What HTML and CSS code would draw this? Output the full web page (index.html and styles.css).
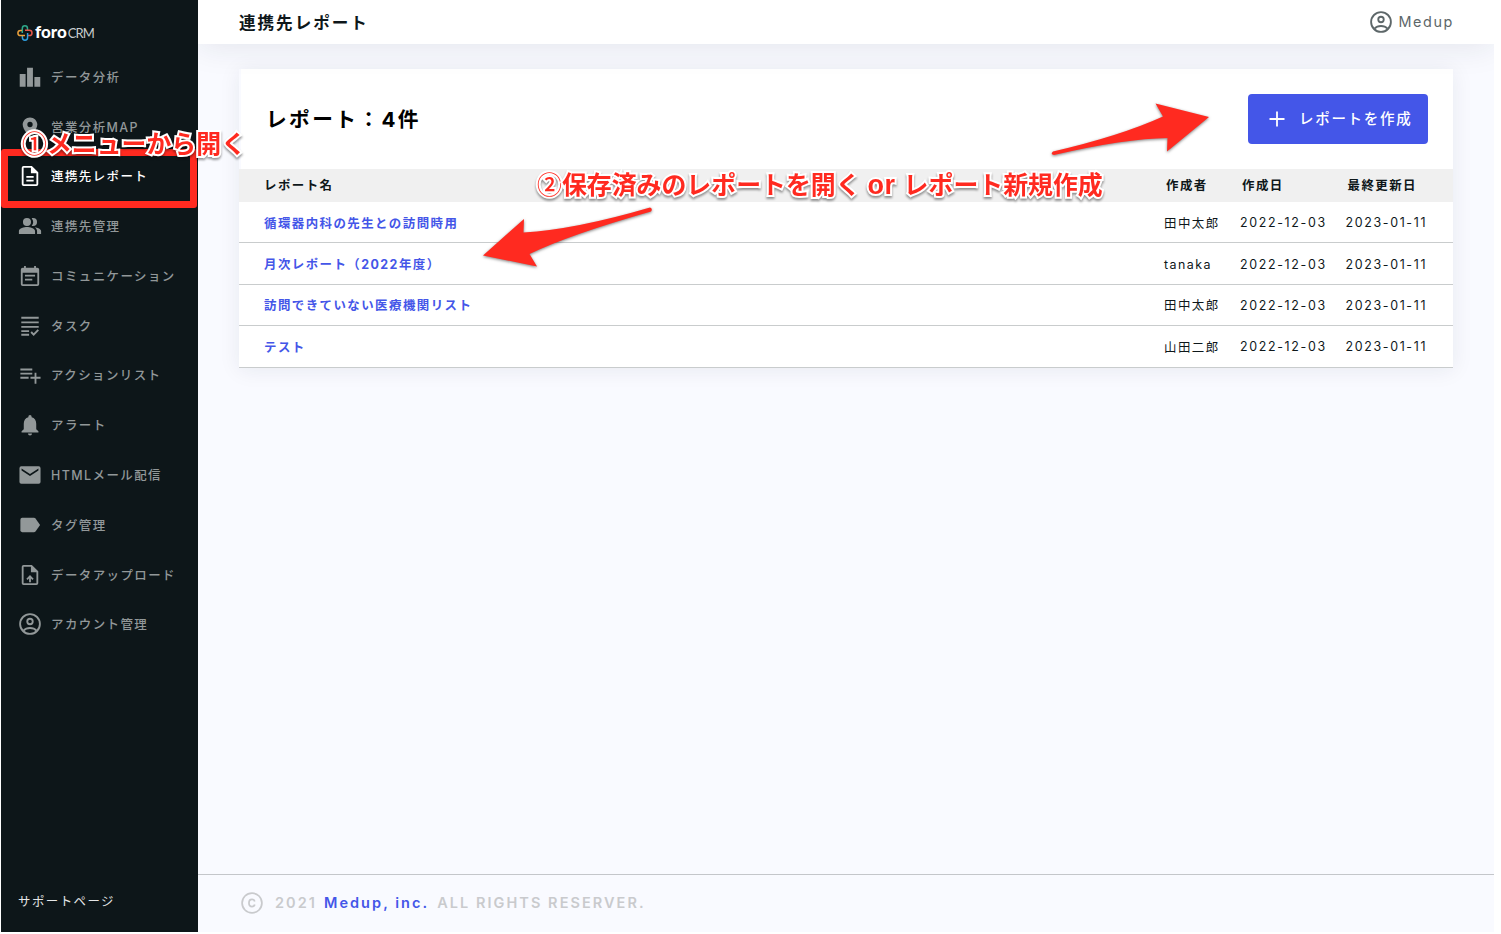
FILE: index.html
```html
<!DOCTYPE html>
<html lang="ja">
<head>
    <meta charset="UTF-8">
    <meta name="viewport" content="width=device-width, initial-scale=1.0">
    <title>連携先レポート | foroCRM</title>
    <link rel="stylesheet" href="styles.css">
</head>
<body>
    <div class="app">
        <aside class="sidebar">
            <a class="logo" href="#">
                <svg class="logo-mark" viewBox="0 0 16 16" fill="none" stroke-width="1.5">
                    <path d="M5.3 8V3.4a2.6 2.6 0 0 1 5.2 0V5" stroke="#2fa88a"/>
                    <path d="M8 5.3h4.4a2.6 2.6 0 0 1 0 5.2H11" stroke="#e2574c"/>
                    <path d="M10.6 8v4.6a2.6 2.6 0 0 1-5.2 0V11" stroke="#2f9fe0"/>
                    <path d="M8 10.6H3.5a2.6 2.6 0 0 1 0-5.2H5" stroke="#e9a03b"/>
                </svg>
                <span class="logo-foro">foro</span><span class="logo-crm">CRM</span>
            </a>
            <nav class="menu">
                <a href="#">
                    <svg viewBox="0 0 24 24"><path d="M.8 8.800h6.400V22.500H.8zM8.800 2h6.400v20.500H8.800zM16.800 12h6.400v10.500h-6.400z"/></svg>
                    <span>データ分析</span>
                </a>
                <a href="#">
                    <svg viewBox="0 0 24 24"><path d="M12 1.5c-4.400 0-8 3.500-8 7.900C4 15.200 12 23 12 23s8-7.800 8-13.600c0-4.400-3.600-7.900-8-7.900zm0 10.700a2.900 2.900 0 1 1 0-5.800 2.900 2.900 0 0 1 0 5.800z"/></svg>
                    <span>営業分析MAP</span>
                </a>
                <a href="#" class="active">
                    <svg viewBox="0 0 24 24"><path d="M8 16h8v2H8zm0-4h8v2H8zm6-11H5a2 2 0 0 0-2 2v18a2 2 0 0 0 2 2h14a2 2 0 0 0 2-2V8zm5 20H5V3h8v6h6z"/></svg>
                    <span>連携先レポート</span>
                </a>
                <a href="#">
                    <svg class="wide" viewBox="0 0 24 24"><path d="M16.670 13.130C18.040 14.060 19 15.320 19 17v3h4v-3c0-2.180-3.570-3.470-6.330-3.870zM9 4a4 4 0 1 0 0 8 4 4 0 0 0 0-8zM15 12a4 4 0 1 0 0-8c-.47 0-.91.1-1.330.24a5.980 5.980 0 0 1 0 7.520c.42.14.86.24 1.330.24zM9 13c-2.670 0-8 1.340-8 4v3h16v-3c0-2.660-5.330-4-8-4z"/></svg>
                    <span>連携先管理</span>
                </a>
                <a href="#">
                    <svg viewBox="0 0 24 24"><path d="M17.500 10.500h-11v2h11zM20 3h-1.500V1h-2v2h-9V1h-2v2H4a2 2 0 0 0-2 2v16a2 2 0 0 0 2 2h16a2 2 0 0 0 2-2V5a2 2 0 0 0-2-2zm0 18H4V8.500h16zm-5.500-6h-8v2h8z"/></svg>
                    <span>コミュニケーション</span>
                </a>
                <a href="#">
                    <svg viewBox="0 0 24 24"><path d="M2.500 2h19v2h-19zM2.500 7h19v2h-19zM2.500 12h19v2h-19zM2.500 16.500h8.500v2H2.500zM2.500 20.500h8.500v2H2.500zM20.300 15.500l1.500 1.500-5.800 5.800-3.500-3.500 1.500-1.500 2 2z"/></svg>
                    <span>タスク</span>
                </a>
                <a href="#">
                    <svg viewBox="0 0 24 24"><path d="M1.500 5h13v2h-13zM1.500 9.500h13v2h-13zM1.500 14h9v2h-9zM17 9.500h2V14h4.500v2H19v5.500h-2V16h-4.500v-2H17z"/></svg>
                    <span>アクションリスト</span>
                </a>
                <a href="#">
                    <svg viewBox="0 0 24 24"><path d="M12 23.500a2.200 2.200 0 0 0 2.200-2.200H9.800a2.200 2.200 0 0 0 2.200 2.200zM18.800 16.500V10.500c0-3.300-1.800-6.100-5-6.900V2.900a1.800 1.800 0 0 0-3.600 0v.7c-3.200.8-5 3.600-5 6.900v6L2.800 18.900v1.200h18.400v-1.200z"/></svg>
                    <span>アラート</span>
                </a>
                <a href="#">
                    <svg viewBox="0 0 24 24"><path d="M21.500 2.500h-19a2 2 0 0 0-2 2v15a2 2 0 0 0 2 2h19a2 2 0 0 0 2-2v-15a2 2 0 0 0-2-2zm-.3 4.600L12 13 2.800 7.100V4.900l9.200 5.900 9.200-5.900z"/></svg>
                    <span>HTMLメール配信</span>
                </a>
                <a href="#">
                    <svg viewBox="0 0 24 24"><path d="M18 5a2.300 2.300 0 0 0-1.700-.8H3.500a2 2 0 0 0-2 2v11.600a2 2 0 0 0 2 2h12.800c.7 0 1.300-.3 1.700-.8l5-7z"/></svg>
                    <span>タグ管理</span>
                </a>
                <a href="#">
                    <svg viewBox="0 0 24 24"><path d="M14 1H5a2 2 0 0 0-2 2v18a2 2 0 0 0 2 2h14a2 2 0 0 0 2-2V8zm5 20H5V3h8v6h6zM8 16l1.400 1.400 1.600-1.600V20h2v-4.200l1.600 1.600L16 16l-4-4z"/></svg>
                    <span>データアップロード</span>
                </a>
                <a href="#">
                    <svg viewBox="0 0 24 24"><use href="#account"/></svg>
                    <span>アカウント管理</span>
                </a>
            </nav>
            <a class="support" href="#">サポートページ</a>
        </aside>

        <div class="content">
            <header class="topbar">
                <h1>連携先レポート</h1>
                <div class="user">
                    <svg viewBox="0 0 24 24">
                        <g id="account" fill="none" stroke="currentColor" stroke-width="2">
                            <circle cx="12" cy="12" r="10.800"/>
                            <circle cx="12" cy="9.300" r="3"/>
                            <path d="M4.800 19.300c1.700-1.800 4.400-2.900 7.200-2.900s5.500 1.100 7.200 2.900"/>
                        </g>
                    </svg>
                    <span>Medup</span>
                </div>
            </header>

            <main>
                <section class="card">
                    <div class="card-head">
                        <h2>レポート：4件</h2>
                        <button class="btn-create">
                            <svg viewBox="0 0 16 16"><path d="M8 .5v15M.5 8h15"/></svg>
                            <span>レポートを作成</span>
                        </button>
                    </div>
                    <table>
                        <thead>
                            <tr>
                                <th>レポート名</th>
                                <th class="col-author">作成者</th>
                                <th class="col-created">作成日</th>
                                <th class="col-updated">最終更新日</th>
                            </tr>
                        </thead>
                        <tbody>
                            <tr>
                                <td><a href="#">循環器内科の先生との訪問時用</a></td>
                                <td>田中太郎</td>
                                <td class="date">2022-12-03</td>
                                <td class="date">2023-01-11</td>
                            </tr>
                            <tr>
                                <td><a href="#">月次レポート（2022年度）</a></td>
                                <td>tanaka</td>
                                <td class="date">2022-12-03</td>
                                <td class="date">2023-01-11</td>
                            </tr>
                            <tr>
                                <td><a href="#">訪問できていない医療機関リスト</a></td>
                                <td>田中太郎</td>
                                <td class="date">2022-12-03</td>
                                <td class="date">2023-01-11</td>
                            </tr>
                            <tr>
                                <td><a href="#">テスト</a></td>
                                <td>山田二郎</td>
                                <td class="date">2022-12-03</td>
                                <td class="date">2023-01-11</td>
                            </tr>
                        </tbody>
                    </table>
                </section>
            </main>

            <footer>
                <svg viewBox="0 0 24 24">
                    <circle cx="12" cy="12" r="10.800"/>
                    <path d="M15 10.400c-.4-1.500-1.500-2.300-3-2.300-2 0-3.300 1.500-3.300 3.900s1.300 3.900 3.300 3.900c1.500 0 2.600-.8 3-2.300"/>
                </svg>
                <span>2021</span>
                <a href="#">Medup, inc.</a>
                <span>ALL RIGHTS RESERVER.</span>
            </footer>
        </div>
    </div>

    <!-- 手順の注釈 -->
    <div class="mark-box"></div>
    <svg class="mark-arrows" viewBox="0 0 1501 934">
        <path d="M1053 151.500Q1120 136 1163 116.500L1155.500 103.500L1209 117L1167 151.500L1167.500 138Q1125 138.500 1054 155Q1050 154 1053 151.500Z"/>
        <path d="M650 207.500Q575 229.500 523.500 232.500L524 219L483 255.500L537 266.500L529.500 254Q570 234.500 651 211.500Q653 208.500 650 207.500Z"/>
    </svg>
    <p class="mark-text mark-menu"><span class="num">①</span>メニューから開く</p>
    <p class="mark-text mark-open"><span class="num">②</span>保存済みのレポートを開く<span class="or">or</span>レポート新規作成</p>
</body>
</html>
```
FILE: styles.css
```css
* {
    box-sizing: border-box;
}

body {
    margin: 0;
    background-color: #fff;
    color: #0e171a;
    font-family: Inter, "Noto Sans CJK JP", sans-serif;
    font-size: 12.45px;
    letter-spacing: 1.45px;
}

a {
    color: #4456e8;
    text-decoration: none;
}

.app {
    display: flex;
    width: 1493px;
    height: 932px;
    margin-left: 1px;
}

/* サイドバー */
.sidebar {
    display: flex;
    flex-direction: column;
    width: 197px;
    background-color: #0d1619;
}

.logo {
    display: flex;
    align-items: center;
    height: 52px;
    padding: 13px 0 0 16px;
    color: #fff;
    letter-spacing: 0;
}

.logo-mark {
    width: 16px;
    height: 16px;
    margin-right: 2px;
}

.logo-foro {
    margin-top: -2px;
    font-family: Lato, sans-serif;
    font-size: 17px;
    font-weight: 900;
}

.logo-crm {
    margin: 1px 0 0 1px;
    font-family: Lato, sans-serif;
    font-size: 13px;
    font-weight: 400;
    letter-spacing: -1px;
    color: #c9cdce;
}

.menu a {
    display: flex;
    align-items: center;
    gap: 10px;
    height: 49.77px;
    padding-left: 18px;
    color: #929899;
    font-weight: 500;
    white-space: nowrap;
}

.menu a.active {
    color: #fff;
}

.menu svg {
    width: 22px;
    height: 22px;
    fill: currentColor;
}

.menu svg.wide {
    overflow: visible;
    transform: scale(1.1);
}

.support {
    margin-top: auto;
    padding: 0 0 21px 17px;
    color: #e5e7e8;
    line-height: 18px;
}

/* メイン */
.content {
    display: flex;
    flex: 1;
    flex-direction: column;
    background-color: #f9faff;
}

.topbar {
    display: flex;
    align-items: center;
    justify-content: space-between;
    height: 44px;
    padding: 0 40px 1px 41px;
    background-color: #fff;
    box-shadow: 0 2px 33px rgba(30, 35, 60, 0.1);
    clip-path: inset(0 0 -50px 0);
}

.topbar h1 {
    margin: 0;
    font-size: 16.6px;
    font-weight: 700;
    letter-spacing: 1.95px;
}

.user {
    display: flex;
    align-items: center;
    gap: 6px;
    color: #5d6769;
    font-size: 14.4px;
    letter-spacing: 1.6px;
}

.user svg {
    width: 22px;
    height: 22px;
}

main {
    flex: 1;
    padding: 25px 41px 0;
}

.card {
    box-shadow: 0 2px 20px rgba(30, 35, 60, 0.08);
}

.card-head {
    display: flex;
    align-items: center;
    justify-content: space-between;
    height: 99.500px;
    margin-left: 2px;
    padding: 0 25px 0 25px;
    background-color: #fff;
}

.card-head h2 {
    margin: 0 0 2px;
    color: #000;
    font-size: 20.7px;
    font-weight: 700;
    letter-spacing: 2.4px;
}

.btn-create {
    display: flex;
    align-items: center;
    gap: 14px;
    width: 180px;
    height: 50px;
    padding: 0 0 0 21px;
    border: 0;
    border-radius: 4px;
    background-color: #4456e8;
    color: #fff;
    font: inherit;
    font-size: 14.5px;
    font-weight: 500;
    letter-spacing: 1.7px;
    white-space: nowrap;
}

.btn-create span {
    margin-bottom: 2px;
}

.btn-create svg {
    width: 16px;
    height: 16px;
    fill: none;
    stroke: #fff;
    stroke-width: 1.8;
}

table {
    width: 100%;
    border-collapse: separate;
    border-spacing: 0;
    table-layout: fixed;
    background-color: #fff;
}

th {
    height: 33.5px;
    padding: 0 0 0 2px;
    background-color: #f0f0f0;
    font-weight: 700;
    text-align: left;
}

td {
    height: 41.4px;
    padding: 1px 0 0;
    border-bottom: 1px solid #c9cccd;
    white-space: nowrap;
}

th:first-child,
td:first-child {
    padding-left: 25px;
}

td a {
    font-weight: 700;
}

td.date {
    letter-spacing: 1.65px;
}

.col-author {
    width: 76px;
}

.col-created {
    width: 105.5px;
}

.col-updated {
    width: 107.5px;
}

footer {
    display: flex;
    align-items: center;
    height: 58px;
    padding: 0 0 2px 43px;
    border-top: 1px solid #c4c6ca;
    color: #c9cacd;
    font-size: 14.5px;
    font-weight: 600;
    letter-spacing: 2.05px;
}

footer svg {
    width: 22px;
    height: 22px;
    margin-right: 12px;
    fill: none;
    stroke: currentColor;
    stroke-width: 1.9;
}

footer a {
    margin: 0 8px 0 7px;
}

/* 注釈 */
.mark-box {
    position: absolute;
    top: 149px;
    left: 1px;
    width: 196px;
    height: 59px;
    border: 7px solid #ff2a20;
    border-radius: 3px;
}

.mark-arrows {
    position: absolute;
    top: 0;
    left: 0;
    width: 1501px;
    height: 934px;
    fill: #ff2a20;
    filter: drop-shadow(0 1.5px 1.5px rgba(0, 0, 0, 0.5));
    pointer-events: none;
}

.mark-text {
    position: absolute;
    margin: 0;
    color: #ff2a20;
    font-family: "Noto Sans CJK JP", sans-serif;
    font-size: 24.9px;
    font-weight: 700;
    letter-spacing: 0;
    line-height: 36px;
    white-space: nowrap;
    -webkit-text-stroke: 4px #fff;
    paint-order: stroke fill;
    filter: drop-shadow(0 2px 1px rgba(0, 0, 0, 0.4));
}

.mark-text .num {
    font-weight: 500;
}

.mark-text .or {
    margin: 0 8px 0 7px;
    font-family: "Liberation Sans", sans-serif;
    font-size: 27px;
    letter-spacing: 0.5px;
}

.mark-menu {
    top: 124px;
    left: 22px;
}

.mark-open {
    top: 165px;
    left: 537px;
}
```
